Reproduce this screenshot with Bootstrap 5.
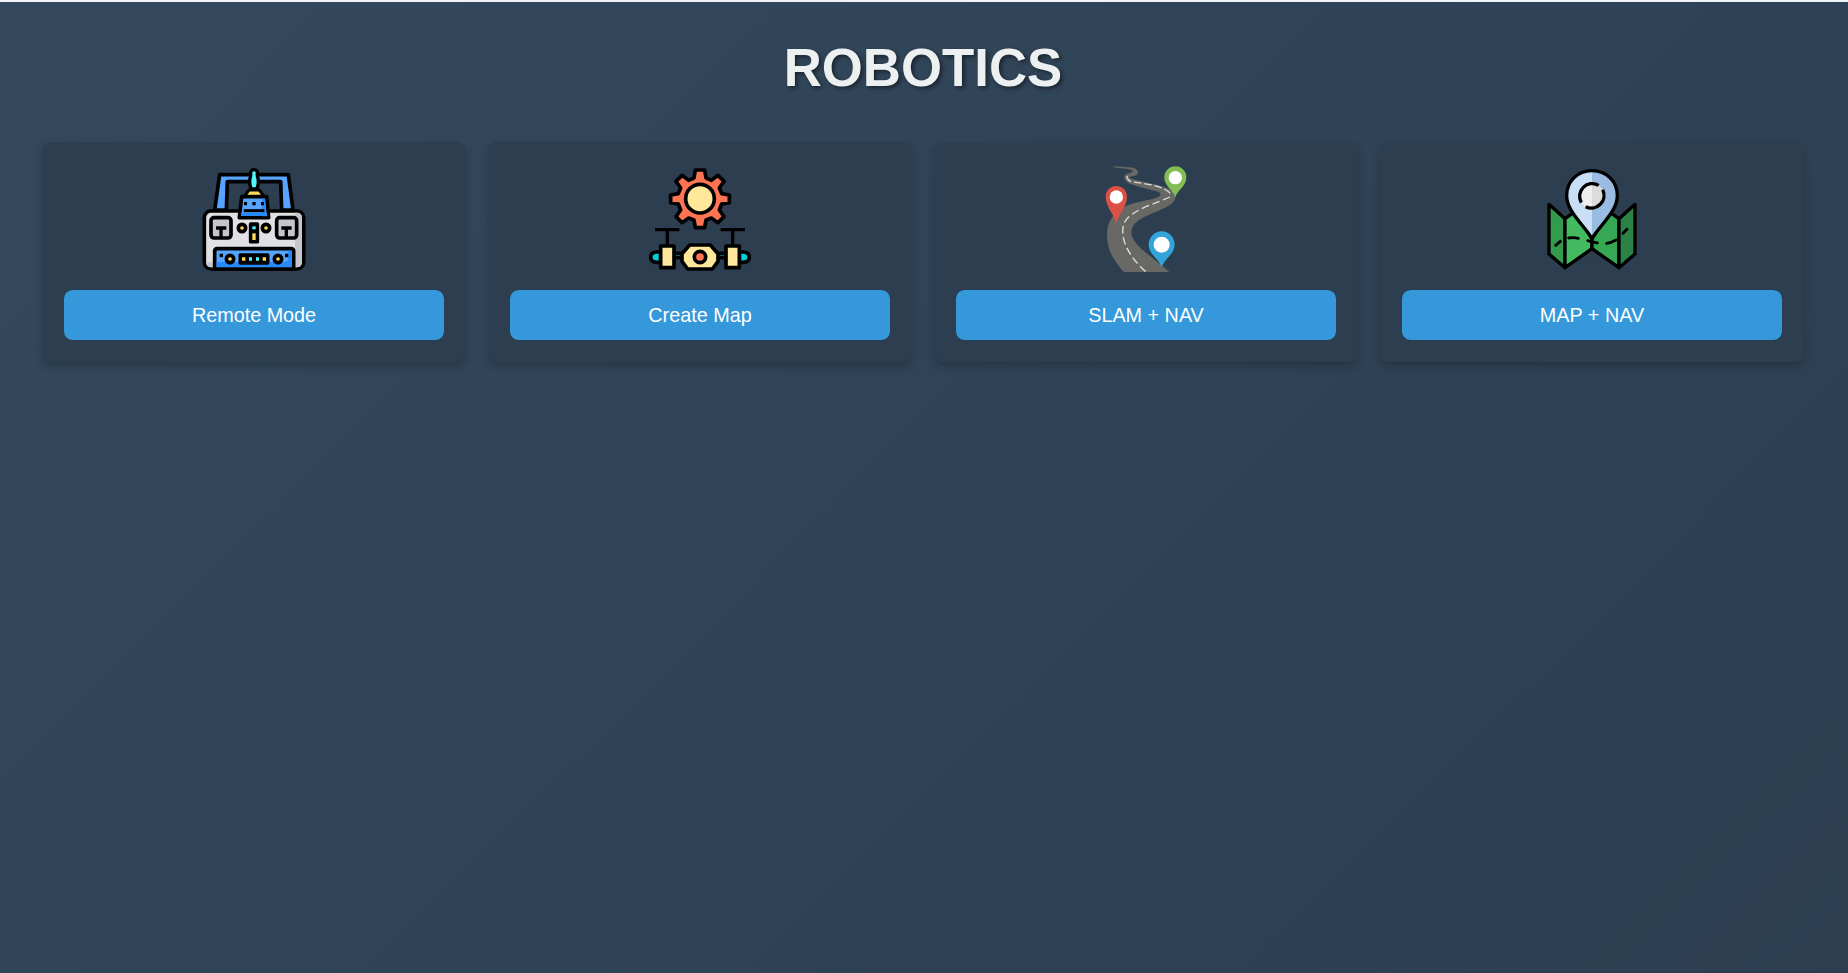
<!DOCTYPE html>
<html lang="en">
<head>
<meta charset="utf-8">
<meta name="viewport" content="width=device-width, initial-scale=1">
<title>Robotics</title>
<link rel="stylesheet" href="https://cdn.jsdelivr.net/npm/bootstrap@5.3.0/dist/css/bootstrap.min.css">
<style>
  body {
    font-family: "Liberation Sans", Arial, sans-serif;
    background: linear-gradient(135deg, #34495e, #2c3e50);
    border-top: 2px solid #f1f5f9;
    color: #ecf0f1;
  }
  main { padding: 35px 44px 0 42px; }
  .page-title {
    font-size: 52.8px;
    line-height: 62px;
    margin-bottom: 43px;
    text-shadow: 2.2px 2.2px 4.4px rgba(0, 0, 0, .5);
  }
  .mode-grid { --bs-gutter-x: 22px; --bs-gutter-y: 22px; }
  .mode-card {
    background: #2c3e50;
    border: 0;
    border-radius: 8.8px;
    padding: 22px;
    box-shadow: 0 4.4px 8.8px rgba(0, 0, 0, .2);
  }
  .mode-icon { width: 120px; height: 108px; margin-bottom: 18px; }
  .mode-btn {
    --bs-btn-bg: #3498db;
    --bs-btn-color: #fff;
    --bs-btn-hover-bg: #2980b9;
    --bs-btn-hover-color: #fff;
    height: 50px;
    padding: 10px 22px;
    line-height: 30px;
    border: 0;
    border-radius: 8.8px;
    font-size: 19.8px;
  }
</style>
</head>
<body class="min-vh-100">
<main>
  <h1 class="page-title text-center fw-bold">ROBOTICS</h1>
  <div class="row row-cols-4 mode-grid">
    <div class="col">
      <div class="card mode-card align-items-center">
        <svg class="mode-icon" viewBox="-3 11 360 324" fill="none" stroke="#000" stroke-width="11" stroke-linejoin="round" aria-hidden="true">
          <path d="M59 149 74 43H280L294 149H260L257 64H97L94 149Z" fill="#57a4ff"/>
          <rect x="28" y="152" width="298" height="174" rx="20" fill="#e1e0e4"/>
          <path d="M300 157h6q15 0 15 15v133q0 16-15 16h-6zM33 306h25v15H48q-15 0-15-15z" fill="#c6c5cc" stroke="none"/>
          <rect x="48" y="172" width="60" height="61" rx="9" fill="#c6c5cc"/>
          <rect x="245" y="172" width="60" height="61" rx="9" fill="#c6c5cc"/>
          <path d="M63 203h31M78 203v29M259 203h31M274 203v29" stroke-width="10"/>
          <path d="M140 109H215L221 172H133Z" fill="#57a4ff"/>
          <path d="M138 157h78l1 10h-79zM201 115h9l5 53h-14z" fill="#258bff" stroke="none"/>
          <path d="M146 151h62" stroke-width="9"/>
          <path d="M147 125h9v10h-9zM172 125h10v10h-10zM198 125h9v10h-9z" fill="#000" stroke="none"/>
          <path d="m148 108 14-19h31l14 19z" fill="#ffdb57" stroke-width="9"/>
          <path d="M177 28q-7 0-10 6v12q-6 18 0 36 10 9 20 0 6-18 0-36V34q-3-6-10-6z" fill="#4ff5fa" stroke-width="10"/>
          <path d="M59 326v-53q0-8 8-8h221q8 0 8 8v53z" fill="#57a4ff"/>
          <path d="M65 305h202q13 0 13-12v-22h10v49H65z" fill="#258bff" stroke="none"/>
          <rect x="136" y="284" width="82" height="24" fill="#000"/>
          <path d="M141 291h10v10h-10zM203 291h10v10h-10z" fill="#ffdb57" stroke="none"/>
          <path d="M162 291h9v10h-9zM183 291h9v10h-9z" fill="#4ff5fa" stroke="none"/>
          <path d="M74 280h10v11H74zM270 280h10v11h-10z" fill="#000" stroke="none"/>
          <g fill="#ffdb57"><circle cx="141" cy="203" r="11"/><circle cx="213" cy="203" r="11"/><circle cx="105" cy="296" r="11"/><circle cx="249" cy="296" r="11"/></g>
          <rect x="167" y="191" width="20" height="53" fill="#000"/>
          <path d="M172 198h10v9h-10z" fill="#4ff5fa" stroke="none"/>
          <path d="M172 219h10v20h-10z" fill="#ffdb57" stroke="none"/>
        </svg>
        <button type="button" class="btn mode-btn w-100">Remote Mode</button>
      </div>
    </div>
    <div class="col">
      <div class="card mode-card align-items-center">
        <svg class="mode-icon" viewBox="0 11 360 324" fill="none" stroke="#000" stroke-width="11" stroke-linejoin="round" aria-hidden="true">
          <path d="M166 29h28l4 24 16 7 20-15 18 18-14 20 7 17 23 4v23l-23 4-7 18 14 20-18 18-20-14-16 6-4 23h-28l-4-23-16-6-20 14-18-18 14-20-7-18-23-4v-23l23-4 7-17-14-20 18-18 20 15 16-7z" fill="#ff7452"/>
          <circle cx="180" cy="115" r="43" fill="#ffe899"/>
          <path d="M45 208h73M242 208h73M82 208v50M278 208v50" stroke-width="10"/>
          <path d="M62 275H48q-16 2-16 15 0 14 16 16h14zM298 275h14q16 2 16 15 0 14-16 16h-14zM102 279h23v13h-23zM235 279h23v13h-23z" fill="#00ced8"/>
          <path d="M62 257h40v65H62zM258 257h40v65h-40z" fill="#ffe899"/>
          <path d="M149 254h62l23 26v23l-17 23h-74l-17-23v-23z" fill="#ffe899"/>
          <circle cx="180" cy="290" r="17" fill="#ff7452"/>
        </svg>
        <button type="button" class="btn mode-btn w-100">Create Map</button>
      </div>
    </div>
    <div class="col">
      <div class="card mode-card align-items-center">
        <svg class="mode-icon" viewBox="4 11 360 324" fill="none" aria-hidden="true">
          <path d="M86 18 132 21C152 22 160 28 160 37 160 49 135 46 134 50 136 59 187 65 226 76 257 84 277 96 272 112 264 145 202 152 160 181 139 196 135 219 147 238 166 270 216 299 254 335H117C94 307 68 277 67 227 66 182 88 157 119 140 155 121 208 121 224 108 239 94 205 91 177 83 144 74 117 68 119 49 120 36 145 40 144 32 143 26 112 25 86 21Z" fill="#686864"/>
          <path d="M127 47Q127 63 146 65C190 71 246 78 259 104" stroke="#dedede" stroke-width="4" stroke-dasharray="22 9"/>
          <path d="M256 110C222 127 136 148 118 189 104 233 130 286 183 334" stroke="#dedede" stroke-width="4" stroke-dasharray="23 11"/>
          <path d="M272 110C264 88 239 78 239 51a33 33 0 0 1 66 0C305 78 280 88 272 110Z" fill="#83be54"/>
          <circle cx="272" cy="52" r="20" fill="#fff"/>
          <path d="M95 187C86 160 63 137 63 109a32 32 0 0 1 64 0C127 137 104 160 95 187Z" fill="#da5145"/>
          <circle cx="95" cy="110" r="20" fill="#fff"/>
          <path d="M231 321C222 293 192 283 192 252a39 39 0 0 1 78 0C270 283 240 293 231 321Z" fill="#33a4da"/>
          <circle cx="231" cy="253" r="24" fill="#fff"/>
        </svg>
        <button type="button" class="btn mode-btn w-100">SLAM + NAV</button>
      </div>
    </div>
    <div class="col">
      <div class="card mode-card align-items-center">
        <svg class="mode-icon" viewBox="0 11 360 324" fill="none" stroke="#000" stroke-width="10" stroke-linecap="round" stroke-linejoin="round" aria-hidden="true">
          <path d="M51 132 99 175V322L51 281Z" fill="#329b4d"/>
          <path d="M99 175 130 153 180 236V265L99 322Z" fill="#43b960"/>
          <path d="M261 175 230 153 180 236V265L261 322Z" fill="#36a853"/>
          <path d="M309 132 261 175V322L309 281Z" fill="#2b8244"/>
          <path d="M180 31C136 31 104 64 104 106 104 151 151 190 180 234Z" fill="#c8dff5" stroke="none"/>
          <path d="M180 31C224 31 256 64 256 106 256 151 209 190 180 234Z" fill="#9abce3" stroke="none"/>
          <path d="M180 31C136 31 104 64 104 106 104 151 151 190 180 234 209 190 256 151 256 106 256 64 224 31 180 31Z"/>
          <path d="M180 70a37 37 0 0 0 0 74z" fill="#eee" stroke="none"/>
          <path d="M180 70a37 37 0 0 1 0 74z" fill="#dcdcdc" stroke="none"/>
          <path d="M148 127A38 38 0 0 1 200 75M212 88A38 38 0 0 1 161 139" stroke-linecap="butt"/>
          <path d="m71 255 14-12M110 233q15-3 29 1M167 241q14 4 29 7M224 249q14-2 28-10M273 219l12-12" stroke-width="8.5"/>
        </svg>
        <button type="button" class="btn mode-btn w-100">MAP + NAV</button>
      </div>
    </div>
  </div>
</main>
<script src="https://cdn.jsdelivr.net/npm/bootstrap@5.3.0/dist/js/bootstrap.bundle.min.js"></script>
</body>
</html>
